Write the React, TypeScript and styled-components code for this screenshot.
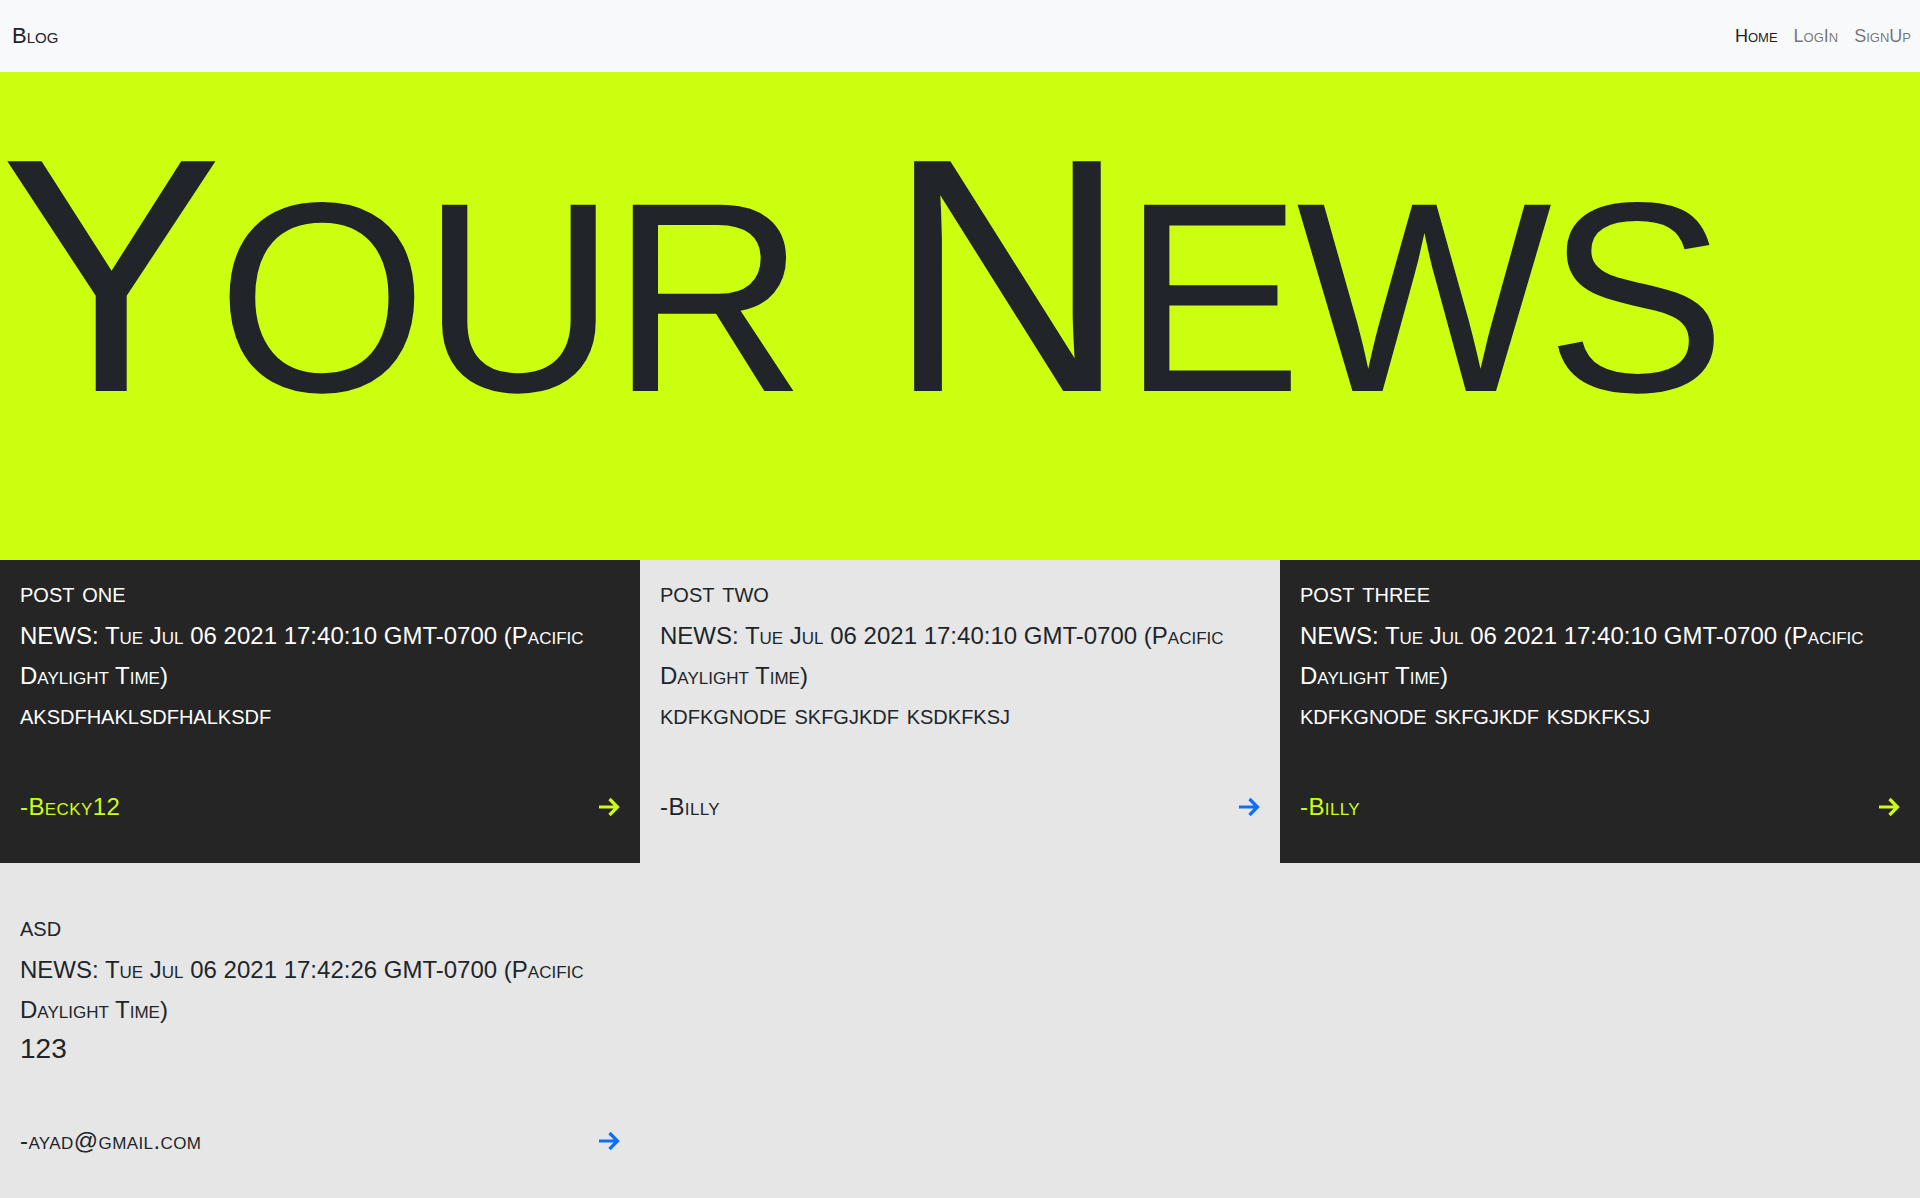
import styled, { createGlobalStyle } from 'styled-components';

const GlobalStyle = createGlobalStyle`
  html, body {
    margin: 0;
    padding: 0;
    background: #e6e6e6;
  }
  body {
    font-family: "Liberation Sans", Arial, sans-serif;
    color: #212529;
  }
`;

const Navbar = styled.nav`
  height: 72px;
  background: #f8f9fa;
  display: flex;
  align-items: center;
  justify-content: space-between;
  padding: 0 1px 0 12px;
  box-sizing: border-box;
  font-variant: small-caps;
`;

const Brand = styled.a`
  font-size: 22px;
  color: #212529;
  text-decoration: none;
`;

const NavList = styled.div`
  display: flex;
  align-items: center;
`;

const NavLink = styled.a<{ $active?: boolean }>`
  font-size: 18px;
  padding: 8px 8px;
  color: ${(p) => (p.$active ? 'rgba(0, 0, 0, 0.9)' : 'rgba(0, 0, 0, 0.55)')};
  text-decoration: none;
`;

const Hero = styled.header`
  height: 488px;
  box-sizing: border-box;
  padding-top: 37px;
  background: #ccff0f;
  overflow: hidden;
`;

const HeroTitle = styled.h1`
  margin: 0;
  font-weight: normal;
  font-size: 334px;
  line-height: 1;
  letter-spacing: -6px;
  white-space: nowrap;
  color: #212529;
`;

const HeroSmall = styled.span`
  font-size: 0.81em;
  text-transform: uppercase;
`;

const Grid = styled.main`
  display: grid;
  grid-template-columns: repeat(3, 1fr);
  row-gap: 31px;
`;

const Card = styled.article<{ $dark?: boolean }>`
  min-height: 303px;
  box-sizing: border-box;
  padding: 17px 20px 40px;
  display: flex;
  flex-direction: column;
  background: ${(p) => (p.$dark ? '#252525' : '#e6e6e6')};
  color: ${(p) => (p.$dark ? '#ffffff' : '#212529')};
  font-variant: small-caps;
`;

const CardTitle = styled.h5`
  margin: 0;
  font-size: 28px;
  font-weight: normal;
  line-height: 32px;
`;

const NewsLine = styled.p`
  margin: 7px 0 0;
  font-size: 24px;
  line-height: 40px;
`;

const Body = styled.p`
  margin: 3px 0 0;
  font-size: 28px;
  line-height: 32px;
`;

const AuthorRow = styled.div`
  margin-top: auto;
  display: flex;
  align-items: center;
  justify-content: space-between;
`;

const Author = styled.span<{ $dark?: boolean }>`
  font-size: 24px;
  line-height: 32px;
  letter-spacing: 0.4px;
  color: ${(p) => (p.$dark ? '#ccff0f' : '#212529')};
`;

const ArrowLink = styled.a<{ $dark?: boolean }>`
  display: flex;
  color: ${(p) => (p.$dark ? '#ccff0f' : '#0d6efd')};
`;

function Arrow() {
  return (
    <svg width="22" height="20" viewBox="0 0 22 20" fill="none">
      <path
        d="M1 10H19.5M11.5 2L19.5 10L11.5 18"
        stroke="currentColor"
        strokeWidth="3.2"
        strokeLinejoin="miter"
      />
    </svg>
  );
}

const posts = [
  {
    title: 'post one',
    date: 'Tue Jul 06 2021 17:40:10 GMT-0700 (Pacific Daylight Time)',
    body: 'aksdfhaklsdfhalksdf',
    author: 'Becky12',
  },
  {
    title: 'post two',
    date: 'Tue Jul 06 2021 17:40:10 GMT-0700 (Pacific Daylight Time)',
    body: 'kdfkgnode skfgjkdf ksdkfksj',
    author: 'Billy',
  },
  {
    title: 'post three',
    date: 'Tue Jul 06 2021 17:40:10 GMT-0700 (Pacific Daylight Time)',
    body: 'kdfkgnode skfgjkdf ksdkfksj',
    author: 'Billy',
  },
  {
    title: 'asd',
    date: 'Tue Jul 06 2021 17:42:26 GMT-0700 (Pacific Daylight Time)',
    body: '123',
    author: 'ayad@gmail.com',
  },
];

export default function App() {
  return (
    <>
      <GlobalStyle />
      <Navbar>
        <Brand href="#">Blog</Brand>
        <NavList>
          <NavLink href="#" $active>
            Home
          </NavLink>
          <NavLink href="#">LogIn</NavLink>
          <NavLink href="#">SignUp</NavLink>
        </NavList>
      </Navbar>
      <Hero>
        <HeroTitle>
          Y<HeroSmall>our</HeroSmall> N<HeroSmall>ews</HeroSmall>
        </HeroTitle>
      </Hero>
      <Grid>
        {posts.map((post, i) => {
          const dark = i % 2 === 0 && i < 3;
          return (
            <Card key={i} $dark={dark}>
              <CardTitle>{post.title}</CardTitle>
              <NewsLine>{`NEWS: ${post.date}`}</NewsLine>
              <Body>{post.body}</Body>
              <AuthorRow>
                <Author $dark={dark}>{`-${post.author}`}</Author>
                <ArrowLink href="#" $dark={dark}>
                  <Arrow />
                </ArrowLink>
              </AuthorRow>
            </Card>
          );
        })}
      </Grid>
    </>
  );
}
